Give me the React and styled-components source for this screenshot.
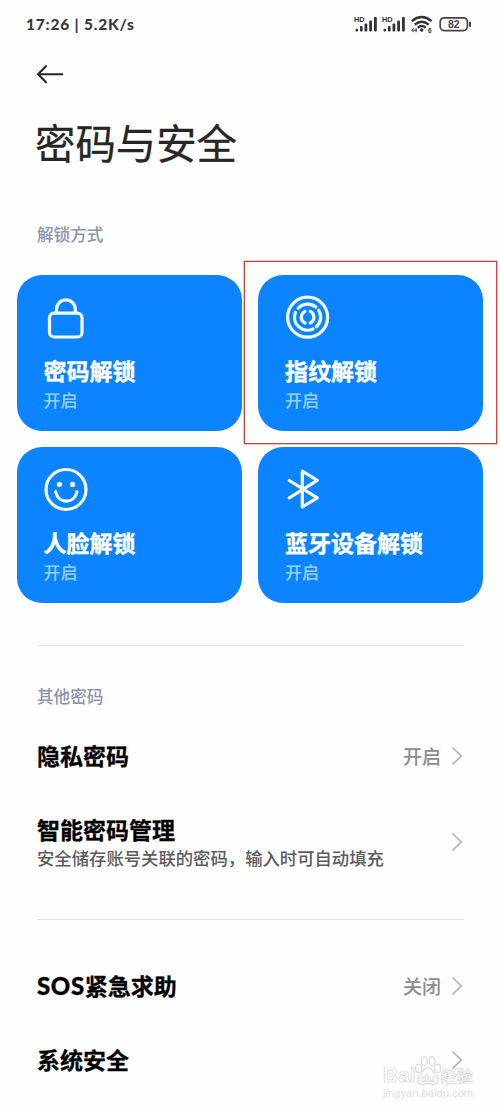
import React from "react";
import styled, { createGlobalStyle } from "styled-components";

const GlobalStyle = createGlobalStyle`
  * { box-sizing: border-box; }
  body {
    margin: 0;
    background: #fefefe;
    font-family: "Noto Sans CJK SC", "Noto Sans", sans-serif;
  }
`;

const Screen = styled.main`
  position: relative;
  width: 500px;
  height: 1111px;
  overflow: hidden;
  display: flex;
  flex-direction: column;
`;

const StatusBar = styled.header`
  display: flex;
  align-items: center;
  justify-content: space-between;
  height: 48px;
  padding: 0 28px 0 26px;
`;

const Clock = styled.span`
  font: 900 15.5px/20px Lato, sans-serif;
  letter-spacing: 0.8px;
  color: #3a3a3a;
  white-space: pre;
`;

const StatusIcons = styled.svg`
  display: block;
  width: 118px;
  height: 24px;
`;

const BackButton = styled.button`
  display: block;
  width: 28px;
  height: 24px;
  margin: 14px 0 0 36px;
  padding: 0;
  border: 0;
  background: none;

  svg { display: block; }
`;

const Title = styled.h1`
  margin: 28px 0 0 35px;
  font-size: 40.4px;
  line-height: 56px;
  font-weight: 400;
  color: #262626;
  -webkit-text-stroke: 0.3px #262626;
`;

const SectionLabel = styled.h2`
  margin: ${(p) => p.$top}px 0 0 37px;
  font-size: 16.6px;
  line-height: 24px;
  font-weight: 500;
  color: #8c93ab;
`;

const CardGrid = styled.section`
  display: grid;
  grid-template-columns: 225px 225px;
  grid-auto-rows: 156px;
  gap: 16.5px;
  margin: 28.5px 0 0 16.5px;
`;

const Card = styled.article`
  position: relative;
  display: flex;
  flex-direction: column;
  align-items: flex-start;
  padding: 18px 0 0 27px;
  border-radius: 25px;
  background: #0d84ff;
`;

const CardIcon = styled.svg`
  display: block;
  width: 46px;
  height: 48px;
  margin-left: -0.5px;
  fill: none;
  stroke: #f4fdff;
  stroke-width: 3.2;
  stroke-linecap: round;
  stroke-linejoin: round;
`;

const CardTitle = styled.h3`
  margin: 12px 0 0;
  font-size: 23px;
  line-height: 34px;
  font-weight: 700;
  color: #fff;
  -webkit-text-stroke: 0.4px #fff;
`;

const CardState = styled.span`
  margin-top: 1px;
  font-size: 17px;
  line-height: 24px;
  font-weight: 500;
  color: #99d0ff;
`;

const Highlight = styled.div`
  position: absolute;
  inset: -13.5px -13.5px -13px -14px;
  border: 1px solid #bf4444;
  box-shadow: 0 0 0 0.6px rgba(191, 68, 68, 0.5);
`;

const Divider = styled.hr`
  width: 427px;
  height: 1px;
  margin: ${(p) => p.$top}px 0 0 37px;
  border: 0;
  background: #e4e4e4;
`;

const Row = styled.div`
  display: flex;
  align-items: center;
  height: ${(p) => p.$height}px;
  margin-top: ${(p) => p.$top || 0}px;
  padding: 0 37px;
`;

const RowText = styled.div`
  flex: 1;
  padding-bottom: ${(p) => p.$lift || 0}px;
`;

const RowTitle = styled.div`
  font-size: 23px;
  line-height: 32px;
  font-weight: 700;
  color: #000;
  -webkit-text-stroke: 0.3px #000;
`;

const Latin = styled.span`
  font-family: Lato, sans-serif;
  font-weight: 900;
  font-size: 24px;
  line-height: 1;
  letter-spacing: 0.6px;
`;

const RowNote = styled.div`
  font-size: 17.35px;
  line-height: 26px;
  font-weight: 500;
  color: #5c5c5c;
  white-space: nowrap;
`;

const RowValue = styled.span`
  margin-right: 10px;
  font-size: 19px;
  line-height: 28px;
  font-weight: 500;
  color: #8c8c8c;
`;

const ChevronIcon = styled.svg`
  display: block;
  width: 12px;
  height: 20px;
  fill: none;
  stroke: #b2b2b2;
  stroke-width: 1.7;
`;

const Watermark = styled.div`
  position: absolute;
  left: 383px;
  top: 1055px;
  width: 94px;
  color: #fff;
`;

const Brand = styled.div`
  display: flex;
  align-items: flex-end;
  height: 32px;
  font: 700 21px/24px "Liberation Sans", sans-serif;
  -webkit-text-stroke: 0.7px #d6d6d6;

  svg { display: block; flex: none; margin: 0 -1px 1px -2px; }
`;

const BrandSuffix = styled.span`
  font: 700 16px/24px "Noto Sans CJK SC", sans-serif;
  white-space: nowrap;
`;

const WatermarkUrl = styled.div`
  font: 400 11.2px/12px "Liberation Sans", sans-serif;
  color: #e0e0e0;
`;

const Chevron = () => (
  <ChevronIcon viewBox="0 0 12 20">
    <path d="M1.5 1.5 10.3 10 1.5 18.5" />
  </ChevronIcon>
);

const SignalBars = ({ x }) => (
  <g transform={`translate(${x} 0)`} fill="#333">
    <text x="0" y="10" fontFamily="Liberation Sans, sans-serif" fontSize="7.3" fontWeight="700">HD</text>
    <rect x="1.5" y="16.8" width="2.6" height="2.7" rx="1" />
    <rect x="6" y="14" width="2.6" height="5.5" rx="1" />
    <rect x="10.5" y="11.5" width="2.8" height="8" rx="1" />
    <rect x="15.2" y="8.5" width="2.8" height="11" rx="1" />
    <rect x="20" y="5" width="2.8" height="14.5" rx="1" />
  </g>
);

const PhoneStatus = () => (
  <StatusIcons viewBox="0 0 118 24">
    <SignalBars x={0} />
    <SignalBars x={28} />
    <g fill="none" stroke="#333" strokeWidth="2.4">
      <path d="M57.8 9.1Q67.7 1.1 77.6 9.1" />
      <path d="M60.7 12.6Q67.7 6.9 74.7 12.6" />
      <path d="M63.8 15.7Q67.7 12.5 71.6 15.7" />
    </g>
    <circle cx="67.7" cy="18" r="1.8" fill="#333" />
    <path d="M58.2 18.2h4.5m-3-2-2 2 2 2m2.4-4v4" fill="none" stroke="#333" strokeWidth="1" />
    <text x="74" y="20.6" fontFamily="Liberation Sans, sans-serif" fontSize="6.5" fontWeight="700" fill="#333">6</text>
    <rect x="86.2" y="5.8" width="27.2" height="12.8" rx="4" fill="none" stroke="#444" strokeWidth="1.7" />
    <path d="M116 10.4v3.6" stroke="#333" strokeWidth="1.8" strokeLinecap="round" />
    <text x="99.8" y="16" textAnchor="middle" fontFamily="Liberation Sans, sans-serif" fontSize="10.5" fontWeight="700" fill="#444">82</text>
  </StatusIcons>
);

const LockGlyph = () => (
  <CardIcon viewBox="0 0 46 48">
    <rect x="6.5" y="20.2" width="32.5" height="23.8" rx="4.5" />
    <path d="M13.5 19.5v-3.3a9.4 9.4 0 0 1 18.8 0V19.5" />
  </CardIcon>
);

const FingerprintGlyph = () => (
  <CardIcon viewBox="0 0 46 48">
    <circle cx="22.6" cy="24.2" r="20" />
    <path d="M13.2 15.2A13 13 0 0 1 30.8 14.1" />
    <path d="M33.7 17.3A13 13 0 0 1 31.4 33.7" />
    <path d="M28 36A13 13 0 0 1 10.4 19.5" />
    <path d="M20 18.4A6.4 6.4 0 0 0 20 30" />
    <path d="M25.2 18.4A6.4 6.4 0 0 1 25.2 30" />
  </CardIcon>
);

const FaceGlyph = () => (
  <CardIcon viewBox="0 0 46 48">
    <circle cx="23" cy="24.5" r="20" />
    <circle cx="16.4" cy="19.4" r="2.6" fill="#f4fdff" stroke="none" />
    <circle cx="29.6" cy="19.4" r="2.6" fill="#f4fdff" stroke="none" />
    <path d="M12.6 26.7c2.5 12.6 18.8 12.6 21.3 0" />
  </CardIcon>
);

const BluetoothGlyph = () => (
  <CardIcon viewBox="0 0 46 48">
    <path d="M4.3 15.5 32.3 32.8 17.3 42V6.2l15 9.2L4.3 32.8" />
  </CardIcon>
);

const methods = [
  { title: "密码解锁", Glyph: LockGlyph },
  { title: "指纹解锁", Glyph: FingerprintGlyph, highlighted: true },
  { title: "人脸解锁", Glyph: FaceGlyph },
  { title: "蓝牙设备解锁", Glyph: BluetoothGlyph },
];

export default function App() {
  return (
    <>
      <GlobalStyle />
      <Screen>
        <StatusBar>
          <Clock>17:26 | 5.2K/s</Clock>
          <PhoneStatus />
        </StatusBar>
        <BackButton aria-label="返回">
          <svg width="28" height="24" viewBox="0 0 28 24" fill="none" stroke="#262626" strokeWidth="2.1" strokeLinecap="round">
            <path d="M26.3 12.2H2M10 4.2 2 12.2l8 8" />
          </svg>
        </BackButton>
        <Title>密码与安全</Title>
        <SectionLabel $top={52}>解锁方式</SectionLabel>
        <CardGrid>
          {methods.map(({ title, Glyph, highlighted }) => (
            <Card key={title}>
              <Glyph />
              <CardTitle>{title}</CardTitle>
              <CardState>开启</CardState>
              {highlighted && <Highlight />}
            </Card>
          ))}
        </CardGrid>
        <Divider $top={42} />
        <SectionLabel $top={38}>其他密码</SectionLabel>
        <Row $top={18} $height={60}>
          <RowText $lift={2}><RowTitle>隐私密码</RowTitle></RowText>
          <RowValue>开启</RowValue>
          <Chevron />
        </Row>
        <Row $top={26} $height={60}>
          <RowText>
            <RowTitle>智能密码管理</RowTitle>
            <RowNote>安全储存账号关联的密码，输入时可自动填充</RowNote>
          </RowText>
          <Chevron />
        </Row>
        <Divider $top={47} />
        <Row $top={36} $height={60}>
          <RowText $lift={2}><RowTitle><Latin>SOS</Latin>紧急求助</RowTitle></RowText>
          <RowValue>关闭</RowValue>
          <Chevron />
        </Row>
        <Row $top={14} $height={60}>
          <RowText $lift={2}><RowTitle>系统安全</RowTitle></RowText>
          <Chevron />
        </Row>
        <Watermark>
          <Brand>
            Bai
            <svg width="28" height="31" viewBox="0 0 26 30" fill="#fff" stroke="#d6d6d6" strokeWidth="1">
              <ellipse cx="4" cy="13" rx="3" ry="4" />
              <ellipse cx="9.5" cy="6" rx="3" ry="4.2" />
              <ellipse cx="17" cy="6" rx="3" ry="4.2" />
              <ellipse cx="22.3" cy="13" rx="3" ry="4" />
              <path d="M13 12c-4 0-4 4-7.5 7-4.5 4-2.5 9.5 2 9.5 2.5 0 3.5-.8 5.500-.8s3 .8 5.500.8c4.500 0 6.500-5.500 2-9.500C17 16 17 12 13 12Z" />
              <text x="13" y="26" textAnchor="middle" fontSize="11" strokeWidth="0.6">du</text>
            </svg>
            <BrandSuffix>经验</BrandSuffix>
          </Brand>
          <WatermarkUrl>jingyan.baidu.com</WatermarkUrl>
        </Watermark>
      </Screen>
    </>
  );
}
